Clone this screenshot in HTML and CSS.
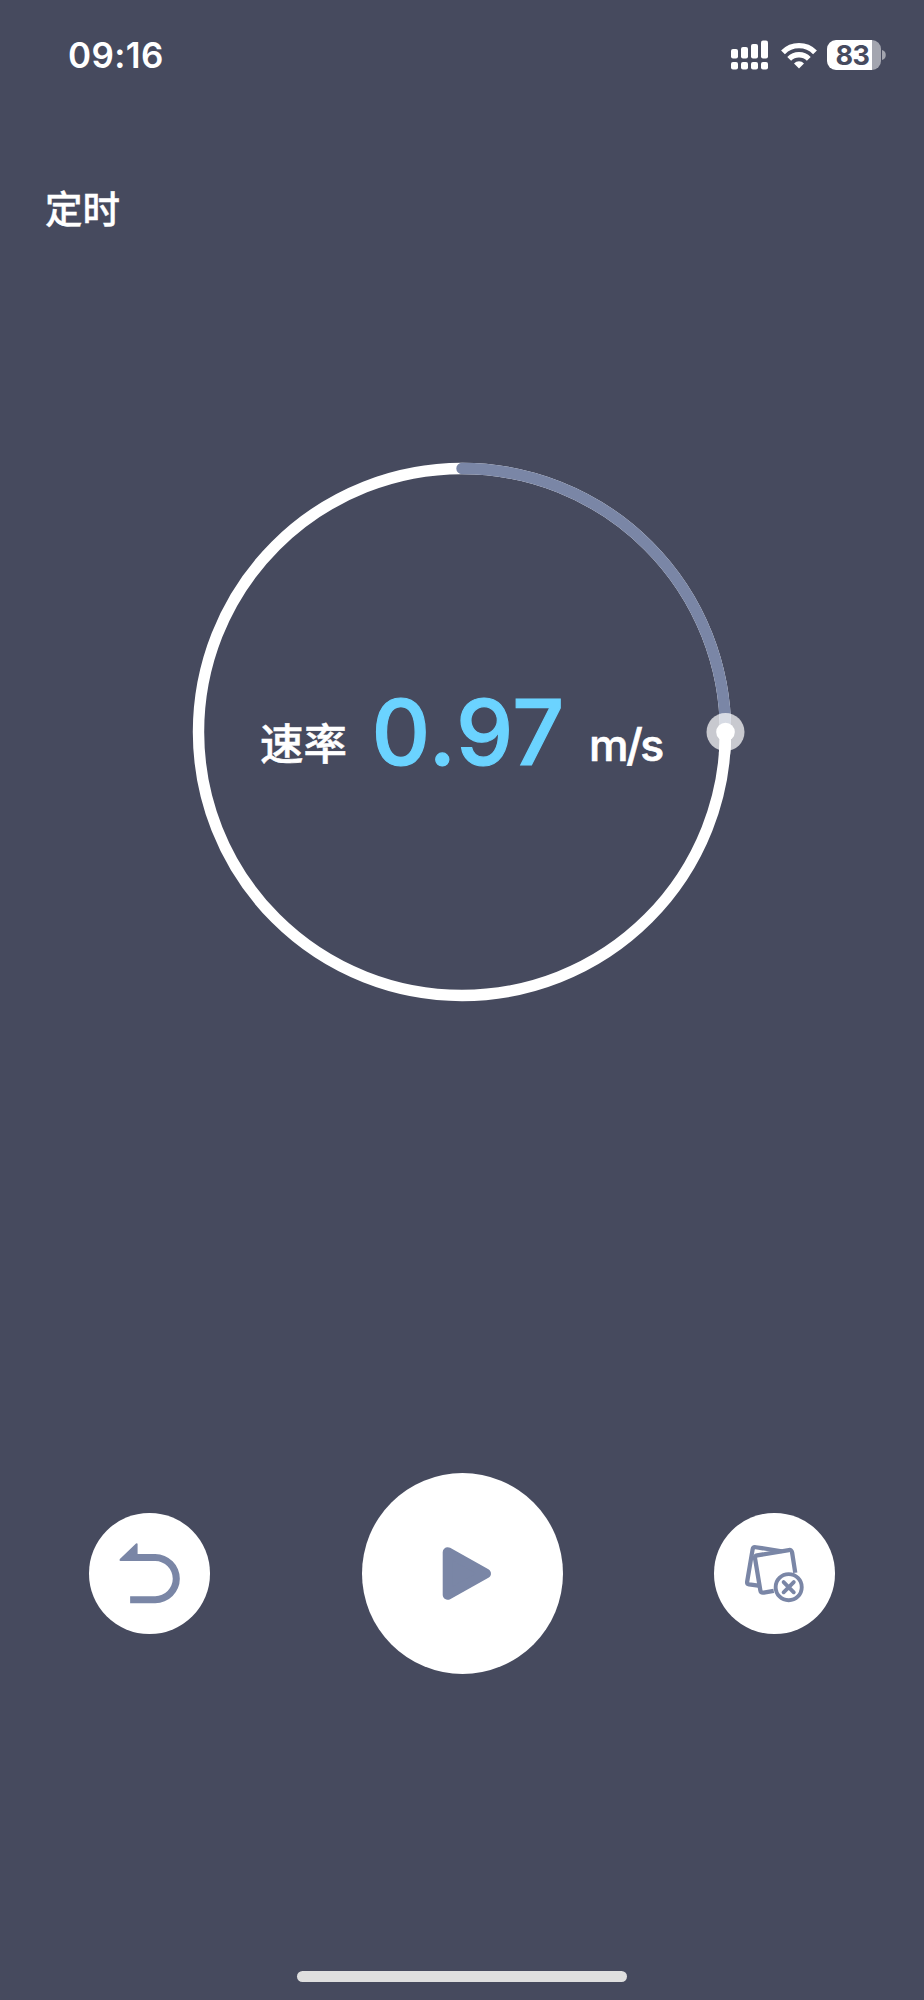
FILE: index.html
```
<!DOCTYPE html>
<html lang="zh-CN">
<head>
<meta charset="utf-8">
<title>定时</title>
<link rel="stylesheet" href="styles.css">
</head>
<body>
<div class="screen">
  <header class="status">
    <time class="clock">09:16</time>
    <div class="indicators">
      <svg class="signal" width="38" height="30" viewBox="0 0 38 30" fill="#fff">
        <rect x="0" y="9" width="7" height="9.5" rx="2"/><rect x="10" y="7" width="7" height="11.5" rx="2"/>
        <rect x="20" y="4" width="7" height="14.5" rx="2"/><rect x="30" y="0.5" width="7" height="18" rx="2"/>
        <rect x="0" y="22" width="7" height="7.5" rx="2"/><rect x="10" y="22" width="7" height="7.5" rx="2"/>
        <rect x="20" y="22" width="7" height="7.5" rx="2"/><rect x="30" y="22" width="7" height="7.5" rx="2"/>
      </svg>
      <svg class="wifi" width="36" height="27" viewBox="0 0 36 27" fill="none" stroke="#fff" stroke-width="5.4">
        <path d="M2 10.3a22.6 22.6 0 0 1 32 0"/>
        <path d="M8.2 16.8a13.8 13.8 0 0 1 19.6 0"/>
        <path d="M18 26.5l-5-5.1a7.1 7.1 0 0 1 10 0z" fill="#fff" stroke="none"/>
      </svg>
      <div class="battery"><span class="level">83</span></div>
      <svg class="cap" width="4" height="10" viewBox="0 0 4 10"><path d="M0 0a5.2 5.2 0 0 1 0 10z" fill="#a3a5af"/></svg>
    </div>
  </header>
  <h1 class="title">定时</h1>
  <main class="dial">
    <svg class="ring" width="566" height="540" viewBox="-283 -270 566 540" fill="none">
      <circle r="263.5" stroke="#fff" stroke-width="11.4"/>
      <path d="M0-263.5A263.5 263.5 0 0 1 263.5 0" stroke="#7a86a6" stroke-width="11.4" stroke-linecap="round"/>
      <path d="M263.5 0A263.5 263.5 0 0 1 262.5 22" stroke="#fff" stroke-width="11.4"/>
      <circle cx="263.5" r="19" fill="#fff" fill-opacity=".7"/>
      <circle cx="263.5" r="9.3" fill="#fff"/>
    </svg>
    <div class="reading">
      <span class="label">速率</span>
      <span class="value">0.97</span>
      <span class="unit">m/s</span>
    </div>
  </main>
  <nav class="controls">
    <button class="round" aria-label="返回">
      <svg width="120.5" height="120.5" viewBox="0 0 121 121">
        <path d="M31 46.3Q29.8 48 31.5 48.3H66.5a17.6 17.6 0 0 1 0 35.2H41.3V90.6H66.5a24.6 24.6 0 0 0 0-49.4H48.8V31Q48.2 29.8 47.2 30.7z" fill="#7a86a6"/>
      </svg>
    </button>
    <button class="round play" aria-label="开始">
      <svg width="201" height="201" viewBox="0 0 201 201">
        <path d="M85.7 79.2L124 100.5L85.7 121.8z" fill="#7a86a6" stroke="#7a86a6" stroke-width="10" stroke-linejoin="round"/>
      </svg>
    </button>
    <button class="round" aria-label="清除">
      <svg width="120.5" height="120.5" viewBox="0 0 121 121" fill="none" stroke="#7a86a6" stroke-width="4.3" stroke-linejoin="round">
        <path d="M68 38.4L42 34.4Q39.2 34 38.8 36.4L33.3 69Q33 71.2 35.2 71.6L44.5 73"/>
        <path d="M81.6 60L78.4 39.5Q77.9 36.7 75.2 37.2L43.3 42.6Q40.8 43.1 41.2 45.5L46.5 77.4Q47 80.4 50 79.9L60 78.1"/>
        <circle cx="75" cy="74.5" r="13.1" stroke-width="3.9"/>
        <path d="M69.9 69.4l10.2 10.2m0-10.2l-10.2 10.2" stroke-width="3.9" stroke-linecap="round"/>
      </svg>
    </button>
  </nav>
  <div class="home"></div>
</div>
</body>
</html>
```
FILE: styles.css
```
* { box-sizing: border-box; }
body { margin: 0; background: #464a5e; }
.screen {
  width: 924px;
  height: 2000px;
  display: flex;
  flex-direction: column;
  overflow: hidden;
  color: #fff;
  font-family: Inter, "Noto Sans CJK SC", sans-serif;
}
.status {
  height: 110px;
  padding: 0 38px 0 68px;
  display: flex;
  justify-content: space-between;
  align-items: center;
}
.clock { font-size: 35px; font-weight: 600; line-height: 40px; letter-spacing: 0.4px; }
.indicators { display: flex; align-items: center; }
.wifi { margin-left: 12px; }
.battery {
  width: 54px;
  height: 30px;
  margin-left: 10px;
  border-radius: 9px;
  background: linear-gradient(to right, #fff 45px, #a3a5af 45px);
}
.level {
  display: block;
  padding-right: 3px;
  color: #464a5e;
  font-size: 27px;
  font-weight: 700;
  line-height: 31px;
  letter-spacing: -0.5px;
  text-align: center;
}
.cap { margin-left: 1px; }
.title {
  margin: 69px 0 0 45px;
  font-family: "Noto Sans CJK SC", sans-serif;
  font-size: 37.5px;
  font-weight: 500;
  line-height: 56px;
  -webkit-text-stroke: 0.35px #fff;
}
.dial { margin-top: 227px; display: grid; justify-items: center; height: 540px; }
.ring, .reading { grid-area: 1 / 1; }
.reading {
  width: 404px;
  height: 340px;
  padding-top: 210px;
  display: flex;
  align-items: baseline;
  line-height: 120px;
}
.label {
  font-family: "Noto Sans CJK SC", sans-serif;
  font-size: 43.5px;
  font-weight: 500;
  -webkit-text-stroke: 0.5px #fff;
  transform: translateY(-5px);
}
.value {
  margin-left: 24.5px;
  color: #6bd3ff;
  font-size: 91px;
  font-weight: 500;
  letter-spacing: 0.7px;
  -webkit-text-stroke: 1.2px #6bd3ff;
}
.unit {
  margin-left: auto;
  font-size: 44.5px;
  font-weight: 500;
  letter-spacing: -2.3px;
  -webkit-text-stroke: 0.7px #fff;
  transform: translateY(-4.5px);
  margin-right: 2px;
}
.controls {
  margin-top: 471px;
  padding: 0 89.3px;
  display: flex;
  justify-content: space-between;
  align-items: center;
  height: 201px;
}
.round {
  width: 120.5px;
  height: 120.5px;
  padding: 0;
  border: 0;
  border-radius: 50%;
  background: #fff;
}
.round svg { display: block; }
.play { width: 201px; height: 201px; }
.home { width: 330px; height: 11px; margin: 297px auto 0; border-radius: 6px; background: #dfdfdf; }
```
